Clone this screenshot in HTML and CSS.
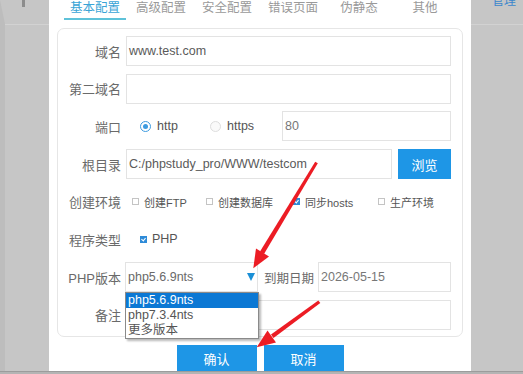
FILE: index.html
```html
<!DOCTYPE html>
<html lang="zh-CN">
<head>
<meta charset="utf-8">
<title>站点配置</title>
<link rel="stylesheet" href="styles.css">
</head>
<body>
<div class="screen">
  <div class="main">
    <aside class="side side-left"><span class="mark"></span></aside>
    <section class="modal">
      <nav class="tabs">
        <span class="tab active">基本配置</span>
        <span class="tab">高级配置</span>
        <span class="tab">安全配置</span>
        <span class="tab">错误页面</span>
        <span class="tab">伪静态</span>
        <span class="tab">其他</span>
      </nav>
      <div class="panel">
        <div class="row">
          <span class="lbl">域名</span>
          <div class="input">www.test.com</div>
        </div>
        <div class="row">
          <span class="lbl">第二域名</span>
          <div class="input"></div>
        </div>
        <div class="row">
          <span class="lbl">端口</span>
          <div class="radios">
            <span class="opt opt-http"><i class="radio on"></i>http</span>
            <span class="opt opt-https"><i class="radio"></i>https</span>
          </div>
          <div class="input input-light">80</div>
        </div>
        <div class="row">
          <span class="lbl">根目录</span>
          <div class="input">C:/phpstudy_pro/WWW/testcom</div>
          <button class="btn btn-browse">浏览</button>
        </div>
        <div class="row">
          <span class="lbl">创建环境</span>
          <div class="checks">
            <span class="chk chk-ftp"><i class="box"></i>创建FTP</span>
            <span class="chk chk-db"><i class="box"></i>创建数据库</span>
            <span class="chk chk-hosts"><i class="box on"></i>同步hosts</span>
            <span class="chk"><i class="box"></i>生产环境</span>
          </div>
        </div>
        <div class="row">
          <span class="lbl">程序类型</span>
          <div class="checks checks-type">
            <span class="chk"><i class="box on"></i>PHP</span>
          </div>
        </div>
        <div class="row row-top">
          <span class="lbl">PHP版本</span>
          <div class="select">
            <span class="select-value">php5.6.9nts</span>
            <i class="caret"></i>
            <ul class="dropdown">
              <li class="option selected">php5.6.9nts</li>
              <li class="option">php7.3.4nts</li>
              <li class="option">更多版本</li>
            </ul>
          </div>
          <span class="lbl-inline">到期日期</span>
          <div class="input input-light">2026-05-15</div>
        </div>
        <div class="row">
          <span class="lbl">备注</span>
          <div class="input"></div>
        </div>
      </div>
      <div class="actions">
        <button class="btn btn-action">确认</button>
        <button class="btn btn-action">取消</button>
      </div>
    </section>
    <aside class="side side-right"><span class="manage">管理</span></aside>
  </div>
  <div class="footer-strip"></div>
  <svg class="arrows" width="523" height="374" viewBox="0 0 523 374">
    <polygon points="317.8,163.3 264,254 260,251.5 315.2,161.7" fill="#ec1c24"/>
    <polygon points="253.3,268.3 269,256.5 256,248.5" fill="#ec1c24"/>
    <polygon points="320.3,303 273.5,338 271,334.5 318.3,300.4" fill="#ec1c24"/>
    <polygon points="256.7,347.3 276,342.5 267.5,330.5" fill="#ec1c24"/>
  </svg>
</div>
</body>
</html>
```
FILE: styles.css
```css
* { box-sizing: border-box; }
html, body { margin: 0; padding: 0; }
body {
  width: 523px;
  height: 374px;
  overflow: hidden;
  background: #c6c6c6;
  font-family: "Liberation Sans", "Noto Sans CJK SC", sans-serif;
  font-size: 12.5px;
  color: #5a5a5a;
}
.screen {
  position: relative;
  width: 523px;
  height: 374px;
  display: flex;
  flex-direction: column;
}
.main {
  display: flex;
  height: 371px;
  overflow: hidden;
}
.side {
  position: relative;
  background: #c6c6c6;
  border-top: 24px solid transparent;
}
.side::before {
  content: "";
  display: block;
  height: 1px;
  background: #d2d2d2;
}
.side-left {
  width: 49px;
  border-left: 5px solid #bdbdbd;
}
.mark {
  position: absolute;
  left: 17px;
  top: -24px;
  width: 3px;
  height: 7px;
  background: #8c8c8c;
}
.side-right {
  width: 52px;
}
.manage {
  position: absolute;
  left: 21px;
  top: -30px;
  color: #3a86cc;
  font-size: 12px;
  line-height: 14px;
}
.modal {
  width: 422px;
  background: #fff;
  padding: 0 8px;
  display: flex;
  flex-direction: column;
}
.tabs {
  display: flex;
  padding-left: 4px;
  height: 20px;
}
.tab {
  width: 66px;
  height: 20px;
  line-height: 17px;
  text-align: center;
  color: #9a9a9a;
  font-size: 12.5px;
}
.tab.active {
  color: #3aa4d6;
  border-bottom: 2px solid #5ec2d9;
  margin: 0 1px 0 3px;
  width: 62px;
}
.tab:nth-child(2) { margin-left: 1px; }
.panel {
  margin-top: 8px;
  height: 309px;
  border: 1px solid #e6e6e6;
  border-radius: 7px;
  padding: 7px 11px 0 0;
  display: flex;
  flex-direction: column;
  gap: 7.7px;
}
.row {
  display: flex;
  align-items: center;
  height: 30px;
  flex: none;
}
.lbl {
  width: 63px;
  text-align: right;
  margin-right: 5px;
  color: #6a6a6a;
  font-size: 13px;
  white-space: nowrap;
}
.input {
  flex: 1;
  height: 30px;
  border: 1px solid #e3e3e3;
  padding-left: 2px;
  line-height: 28px;
  color: #5a5a5a;
  background: #fff;
  white-space: nowrap;
  overflow: hidden;
}
.input-light { color: #777; }
.radios {
  display: flex;
  padding-left: 14px;
  color: #555;
}
.opt {
  display: flex;
  align-items: center;
}
.opt-http { width: 70px; }
.opt-https { width: 72px; }
.radio {
  width: 11px;
  height: 11px;
  border-radius: 50%;
  border: 1px solid #dedede;
  background: #fafafa;
  margin-right: 6px;
  position: relative;
}
.radio.on {
  border-color: #3d9be0;
  background: #fff;
}
.radio.on::after {
  content: "";
  position: absolute;
  left: 2px;
  top: 2px;
  width: 5px;
  height: 5px;
  border-radius: 50%;
  background: #3d9be0;
}
.checks {
  display: flex;
  padding-left: 6px;
  font-size: 11px;
  color: #555;
}
.checks-type {
  padding-left: 14px;
  font-size: 12.5px;
}
.chk {
  display: flex;
  align-items: center;
}
.chk-ftp { width: 74px; }
.chk-db { width: 87px; }
.chk-hosts { width: 85px; }
.box {
  width: 7px;
  height: 7px;
  border: 1px solid #c4c4c4;
  background: #fff;
  margin-right: 5px;
  position: relative;
}
.box.on {
  border-color: #2e8bd8;
  background: #2e8bd8;
}
.box.on::after {
  content: "";
  position: absolute;
  left: 1px;
  top: 0px;
  width: 2px;
  height: 3px;
  border-right: 1px solid #fff;
  border-bottom: 1px solid #fff;
  transform: rotate(40deg);
}
.btn {
  border: none;
  background: #1e96e6;
  color: #fff;
  font-family: inherit;
  font-size: 13px;
  padding: 0;
}
.btn-browse {
  width: 53px;
  height: 30px;
  margin-left: 6px;
}
.select {
  position: relative;
  width: 133px;
  height: 30px;
  margin-left: -1px;
  border: 1px solid #e3e3e3;
  display: flex;
  align-items: center;
  padding-left: 2px;
}
.select-value {
  flex: 1;
  color: #6a6a6a;
}
.caret {
  width: 0;
  height: 0;
  border-left: 4.5px solid transparent;
  border-right: 4.5px solid transparent;
  border-top: 8px solid #1a8fd6;
  margin-right: 2px;
}
.dropdown {
  position: absolute;
  left: -1px;
  top: 29px;
  width: 134px;
  margin: 0;
  padding: 0;
  list-style: none;
  background: #fff;
  border: 1px solid #8a8a8a;
  box-shadow: 2px 2px 2px rgba(0, 0, 0, 0.28);
  z-index: 2;
}
.option {
  height: 15px;
  line-height: 15px;
  padding-left: 2px;
  color: #555;
}
.option.selected {
  background: #0b78d4;
  color: #fff;
}
.lbl-inline {
  margin-left: 6px;
  margin-right: 4px;
  color: #6a6a6a;
  font-size: 12.5px;
  white-space: nowrap;
}
.actions {
  display: flex;
  justify-content: center;
  gap: 7px;
  margin-top: 8px;
}
.btn-action {
  width: 80px;
  height: 26px;
}
.footer-strip {
  height: 3px;
  background: #b4b4b4;
  border-top: 1px solid #9c9c9c;
}
.arrows {
  position: absolute;
  left: 0;
  top: 0;
  pointer-events: none;
  z-index: 5;
}
```
